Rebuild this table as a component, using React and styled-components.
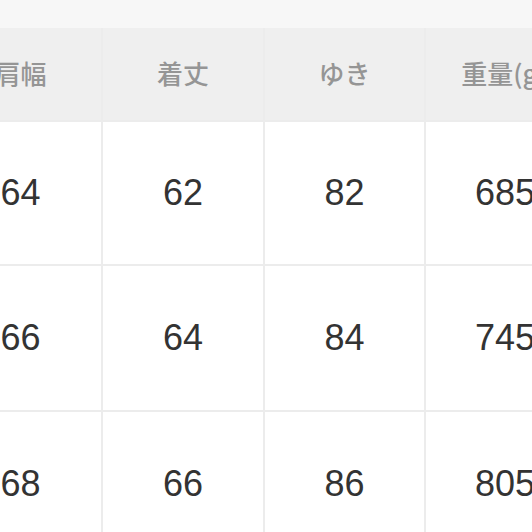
import React from 'react';
import styled, { createGlobalStyle } from 'styled-components';

const GlobalStyle = createGlobalStyle`
    html, body {
        margin: 0;
        padding: 0;
        background: #f7f7f7;
    }
    body {
        font-family: "Liberation Sans", "Noto Sans CJK JP", sans-serif;
    }
`

const Page = styled.div`
    width: 532px;
    height: 532px;
    overflow: hidden;
    background: #f7f7f7;
    padding-top: 28px;
    box-sizing: border-box;
`

const Table = styled.div`
    display: grid;
    grid-template-columns: 161px 160px 159px 170px;
    grid-template-rows: 92px 142px 144px 144px;
    gap: 2px;
    margin-left: -60px;
    width: 660px;
    background: #ececec;
`

const HeadCell = styled.div`
    display: flex;
    align-items: center;
    justify-content: center;
    background: #efefef;
    color: #959595;
    font-family: "Noto Sans CJK JP", sans-serif;
    font-weight: 500;
    font-size: 26px;
    white-space: nowrap;
    padding-bottom: 4px;
    padding-right: ${p => p.$pull || 0}px;
`

const Cell = styled.div`
    display: flex;
    align-items: center;
    justify-content: center;
    background: #fff;
    color: #333;
    font-size: 36px;
    padding-right: ${p => p.$pull || 0}px;
`

const headers = ['肩幅', '着丈', 'ゆき', '重量(g)'];
const rows = [
    ['64', '62', '82', '685'],
    ['66', '64', '84', '745'],
    ['68', '66', '86', '805'],
];

const App = () => {
    return (
        <Page>
            <GlobalStyle />
            <Table>
                {headers.map((h, j) => <HeadCell key={h} $pull={j === 3 ? 14 : 0}>{h}</HeadCell>)}
                {rows.map((r, i) =>
                    r.map((v, j) => <Cell key={i + '-' + j} $pull={j === 3 ? 12 : 0}>{v}</Cell>)
                )}
            </Table>
        </Page>
    )
}

export default App;
